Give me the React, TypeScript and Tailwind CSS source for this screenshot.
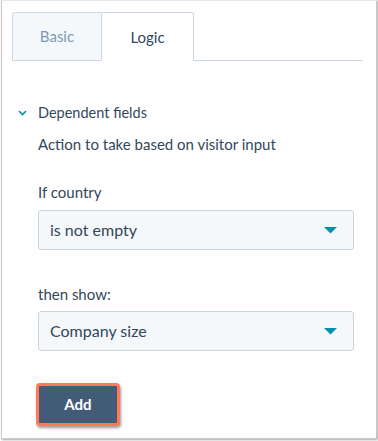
import React from 'react';

const Caret = () => (
  <svg width="13" height="7" viewBox="0 0 13 7" className="shrink-0">
    <path d="M0 0 L13 0 L6.5 6.5 Z" fill="#0091ae" />
  </svg>
);

const Select: React.FC<{ value: string }> = ({ value }) => (
  <div className="flex items-center justify-between h-[40px] w-[316px] rounded-[3px] border border-[#cbd6e2] bg-[#f5f8fa] pl-[11px] pr-[16px]">
    <span className="text-[16px] text-[#33475b]">{value}</span>
    <Caret />
  </div>
);

export default function App() {
  return (
    <div className="w-[378px] h-[441px] bg-white" style={{ fontFamily: 'Lato, "Open Sans", sans-serif' }}>
      <div className="ml-[1px] w-[376px] h-[439px] border border-[#c9c9c9] border-t-[#e8e8e8] shadow-[1px_1px_2px_rgba(0,0,0,0.35)] bg-white">
        {/* Tabs */}
        <div className="flex items-end pl-[10px] pt-[11px] pr-[14px]">
          <div className="w-[90px] h-[49px] flex items-center justify-center bg-[#f5f8fa] border border-[#cbd6e2] rounded-tl-[3px] text-[15px] text-[#7c98b6]">
            Basic
          </div>
          <div className="w-[92px] h-[49px] flex items-center justify-center bg-white border-t border-r border-[#cbd6e2] rounded-tr-[3px] text-[15px] text-[#33475b]">
            Logic
          </div>
          <div className="flex-1 border-b border-[#cbd6e2]" />
        </div>

        {/* Dependent fields */}
        <div className="pl-[16px] pt-[42px]">
          <div className="flex items-center h-[20px]">
            <svg width="9" height="6" viewBox="0 0 9 6" className="mr-[11px]">
              <path d="M1 1 L4.5 4.5 L8 1" fill="none" stroke="#0091ae" strokeWidth="1.6" />
            </svg>
            <span className="text-[14.5px] text-[#33475b]">Dependent fields</span>
          </div>

          <div className="pl-[20px]">
            <div className="mt-[11px] text-[15px] text-[#33475b] leading-[20px]">
              Action to take based on visitor input
            </div>

            <div className="mt-[28px] text-[15px] text-[#33475b] leading-[20px]">If country</div>
            <div className="mt-[8px]">
              <Select value="is not empty" />
            </div>

            <div className="mt-[34px] text-[15px] text-[#33475b] leading-[20px]">then show:</div>
            <div className="mt-[7px]">
              <Select value="Company size" />
            </div>

            <div className="mt-[32px] -ml-[2px] w-[84px] h-[43px] rounded-[4px] border-[3px] border-[#ff7a59] bg-[#425b76] shadow-[1px_2px_3px_rgba(0,0,0,0.4)] flex items-center justify-center">
              <span className="text-[15px] font-bold text-white">Add</span>
            </div>
          </div>
        </div>
      </div>
    </div>
  );
}
